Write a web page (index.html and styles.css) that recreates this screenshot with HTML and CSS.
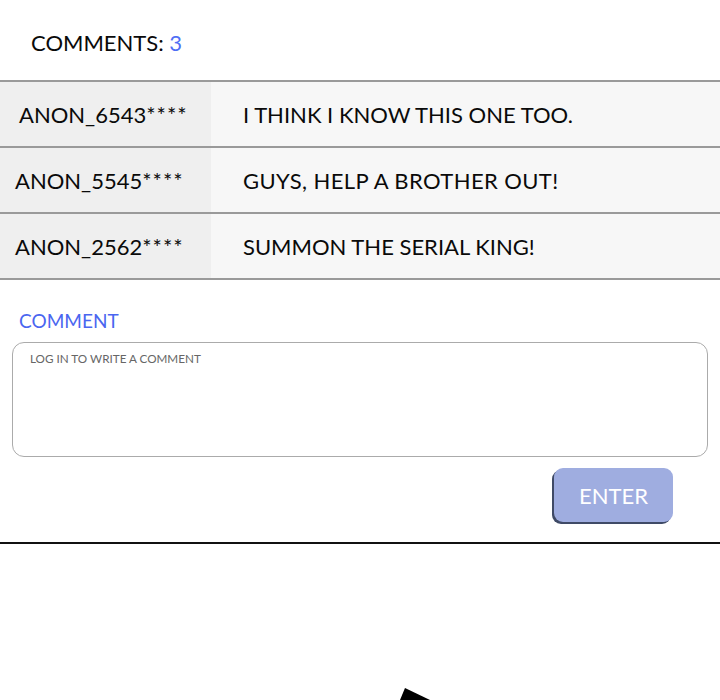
FILE: index.html
```html
<!DOCTYPE html>
<html>
<head>
<meta charset="utf-8">
<link rel="stylesheet" href="styles.css">
</head>
<body>
<div class="page">
  <header class="head">COMMENTS: <span class="count">3</span></header>
  <div class="list">
    <div class="row">
      <div class="name n1">ANON_6543<span class="stars">****</span></div>
      <div class="msg">I THINK I KNOW THIS ONE TOO.</div>
    </div>
    <div class="row">
      <div class="name">ANON_5545<span class="stars">****</span></div>
      <div class="msg wide">GUYS, HELP A BROTHER OUT!</div>
    </div>
    <div class="row">
      <div class="name">ANON_2562<span class="stars">****</span></div>
      <div class="msg">SUMMON THE SERIAL KING!</div>
    </div>
  </div>
  <section class="form">
    <div class="label">COMMENT</div>
    <div class="box"><span class="ph">LOG IN TO WRITE A COMMENT</span></div>
    <div class="actions"><div class="btn">ENTER</div></div>
  </section>
  <div class="below">
    <svg class="mark" width="40" height="14" viewBox="0 0 40 14"><polygon points="4,14 9,2 34,14" fill="#000"/></svg>
  </div>
</div>
</body>
</html>
```
FILE: styles.css
```css
* { box-sizing: border-box; }
html, body { margin: 0; padding: 0; background: #fff; }
body { font-family: Lato, "Noto Sans", sans-serif; color: #0a0a0a; }
.page { width: 720px; height: 700px; overflow: hidden; }
.head {
  height: 80px;
  padding: 30px 0 0 31px;
  font-size: 22px;
  line-height: 26px;
}
.count { color: #4f6ef5; }
.list { border-top: 2px solid #9a9a9a; }
.row {
  display: flex;
  height: 66px;
  border-bottom: 2px solid #9a9a9a;
  background: #f7f7f7;
}
.name {
  width: 211px;
  background: #efefef;
  padding: 20px 0 0 15px;
  font-size: 22px;
  line-height: 26px;
}
.name.n1 { padding-left: 19px; }
.stars { letter-spacing: 1px; }
.msg {
  padding: 20px 0 0 32px;
  font-size: 22px;
  line-height: 26px;
}
.msg.wide { letter-spacing: 0.4px; }
.form { padding: 30px 12px 0 12px; height: 264px; border-bottom: 2px solid #111; }
.label {
  color: #4a66f0;
  font-size: 19px;
  line-height: 22px;
  padding-left: 7px;
  margin-bottom: 10px;
}
.box {
  height: 115px;
  border: 1.5px solid #ababab;
  border-radius: 12px;
  padding: 4px 17px;
}
.ph { font-size: 11.7px; color: #666; }
.actions { display: flex; justify-content: flex-end; padding: 11px 35px 0 0; }
.btn {
  width: 119px;
  height: 54px;
  background: #9fade0;
  border-radius: 9px;
  box-shadow: -2px 2px 0 #3f4a66;
  color: #fff;
  font-size: 22px;
  display: flex;
  align-items: center;
  justify-content: center;
}
.below { height: 156px; position: relative; }
.mark { position: absolute; left: 396px; top: 142px; }
```
